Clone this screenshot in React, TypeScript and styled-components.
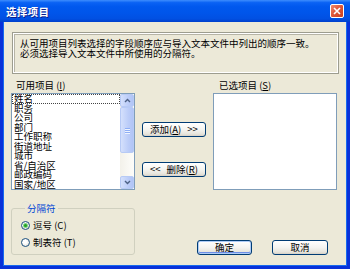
import React from "react";
import styled, { createGlobalStyle } from "styled-components";

const GlobalStyle = createGlobalStyle`
  html, body {
    margin: 0;
    padding: 0;
    background: #0831d9;
  }
  body {
    font-family: "Noto Sans CJK SC", "Liberation Sans", sans-serif;
    font-size: 9.5px;
    color: #000;
  }
`;

const Window = styled.div`
  width: 350px;
  height: 269px;
  display: flex;
  flex-direction: column;
  box-sizing: border-box;
  overflow: hidden;
`;

const TitleBar = styled.div`
  height: 22px;
  flex: none;
  display: flex;
  align-items: center;
  justify-content: space-between;
  padding: 0 6px;
  background: linear-gradient(
    to bottom,
    #3d8dfd 0%,
    #0a62f4 12%,
    #0058ee 30%,
    #0055ea 60%,
    #0150e2 85%,
    #003fcc 100%
  );
`;

const Title = styled.span`
  color: #fff;
  font-weight: bold;
  font-size: 10.5px;
  letter-spacing: 0.3px;
  text-shadow: 1px 1px 0 #0a1e8c;
`;

const CloseButton = styled.div`
  width: 14px;
  height: 14px;
  box-sizing: border-box;
  border: 1px solid #fff;
  border-radius: 2px;
  background: linear-gradient(135deg, #f08a6c 0%, #e0583a 45%, #c8401f 100%);
  display: flex;
  align-items: center;
  justify-content: center;
`;

const Body = styled.div`
  flex: 1;
  display: flex;
  flex-direction: column;
  background: #ece9d8;
  border: 3px solid #0831d9;
  border-top: none;
  box-shadow: inset 1px 0 0 #166aee, inset -1px 0 0 #166aee, inset 0 -1px 0 #166aee;
  padding: 10px 8px 11px 8px;
`;

const InfoBox = styled.div`
  height: 42px;
  box-sizing: border-box;
  margin-left: 1px;
  border: 1px solid #9d9d8f;
  box-shadow: inset 1px 1px 0 #fff, inset -1px -1px 0 #fff, inset 2px 2px 0 #b6b4a6;
  padding: 5px 7px;
  line-height: 10px;
`;

const Columns = styled.div`
  display: grid;
  grid-template-columns: 124px 1fr 124px;
  margin-top: 6px;
  margin-right: 2px;
`;

const Column = styled.div`
  display: flex;
  flex-direction: column;
`;

const Label = styled.div<{ $indent: number }>`
  height: 10px;
  line-height: 10px;
  padding-left: ${(p) => p.$indent}px;
  margin-bottom: 3px;
`;

const ListBox = styled.div`
  height: 97px;
  box-sizing: border-box;
  border: 1px solid #7f9db9;
  background: #fff;
  display: flex;
`;

const Items = styled.div`
  flex: 1;
  display: flex;
  flex-direction: column;
`;

const Item = styled.div<{ $focused?: boolean }>`
  height: 9.5px;
  line-height: 9.5px;
  padding-left: 2px;
  white-space: nowrap;
  outline: ${(p) => (p.$focused ? "1px dotted #444" : "none")};
  outline-offset: -1px;
`;

const ScrollBar = styled.div`
  width: 14px;
  display: flex;
  flex-direction: column;
  background: linear-gradient(to right, #f3f1ea, #fdfdfa);
`;

const ScrollButton = styled.div<{ $h: number }>`
  height: ${(p) => p.$h}px;
  box-sizing: border-box;
  border: 1px solid #b7caf5;
  border-radius: 2px;
  background: linear-gradient(to right, #d4e0fc, #bccdf8 60%, #b0c4f6);
  display: flex;
  align-items: center;
  justify-content: center;
`;

const Thumb = styled(ScrollButton)`
  flex-direction: column;
  gap: 1px;
`;

const Grip = styled.div`
  width: 5px;
  height: 1px;
  background: #8eaef5;
  box-shadow: 0 1px 0 #eef3fe;
`;

const Track = styled.div`
  flex: 1;
`;

const Middle = styled.div`
  display: flex;
  flex-direction: column;
  align-items: center;
  padding-top: 42px;
  gap: 25px;
`;

const Button = styled.div<{ $width: number; $default?: boolean }>`
  width: ${(p) => p.$width}px;
  height: 15px;
  box-sizing: border-box;
  border: 1px solid #003c74;
  border-radius: 3px;
  background: linear-gradient(to bottom, #ffffff 0%, #f4f4f0 50%, #e6e4dc 85%, #d6d0c5 100%);
  box-shadow: ${(p) =>
    p.$default ? "inset 0 0 0 1px #aeccf6, inset 0 -1px 0 1px #6d8ee6" : "none"};
  display: flex;
  align-items: center;
  justify-content: center;
  line-height: 13px;
  white-space: nowrap;
  gap: 6px;
`;

const Bottom = styled.div`
  display: flex;
  align-items: flex-end;
  justify-content: space-between;
  margin-top: 13px;
  margin-right: 11px;
`;

const GroupBox = styled.fieldset`
  width: 124px;
  box-sizing: border-box;
  margin: 0;
  padding: 5px 8px 5px 9px;
  border: 1px solid #d0d0bf;
  border-radius: 3px;
  display: flex;
  flex-direction: column;
  gap: 3px;
`;

const Legend = styled.legend`
  color: #0046d5;
  padding: 0 2px;
  margin-left: 4px;
  line-height: 10px;
  font-size: 9.5px;
`;

const RadioRow = styled.div`
  height: 14px;
  display: flex;
  align-items: center;
  gap: 3px;
`;

const RadioDot = styled.div<{ $checked?: boolean }>`
  width: 9px;
  height: 9px;
  box-sizing: border-box;
  border-radius: 50%;
  border: 1px solid #1c5180;
  background: radial-gradient(circle at 40% 40%, #ffffff 30%, #dcdad0 100%);
  display: flex;
  align-items: center;
  justify-content: center;
  &::after {
    content: "";
    width: 3px;
    height: 3px;
    border-radius: 50%;
    background: ${(p) => (p.$checked ? "#21a121" : "transparent")};
    box-shadow: ${(p) => (p.$checked ? "0 0 0 1px #7fd27f" : "none")};
  }
`;

const ButtonRow = styled.div`
  display: flex;
  gap: 20px;
`;

const Chevron = ({ up }: { up?: boolean }) => (
  <svg width="7" height="5" viewBox="0 0 7 5">
    <path
      d={up ? "M1 4 L3.5 1.5 L6 4" : "M1 1 L3.5 3.5 L6 1"}
      fill="none"
      stroke="#4d6185"
      strokeWidth="1.4"
    />
  </svg>
);

const fields = [
  "姓名",
  "职务",
  "公司",
  "部门",
  "工作职称",
  "街道地址",
  "城市",
  "省/自治区",
  "邮政编码",
  "国家/地区",
];

export default function App() {
  return (
    <>
      <GlobalStyle />
      <Window>
        <TitleBar>
          <Title>选择项目</Title>
          <CloseButton>
            <svg width="8" height="8" viewBox="0 0 8 8">
              <path d="M1 1 L7 7 M7 1 L1 7" stroke="#fff" strokeWidth="1.6" />
            </svg>
          </CloseButton>
        </TitleBar>
        <Body>
          <InfoBox>
            从可用项目列表选择的字段顺序应与导入文本文件中列出的顺序一致。
            <br />
            必须选择导入文本文件中所使用的分隔符。
          </InfoBox>
          <Columns>
            <Column>
              <Label $indent={5}>
                可用项目 (<u>I</u>)
              </Label>
              <ListBox>
                <Items>
                  {fields.map((f, i) => (
                    <Item key={f} $focused={i === 0}>
                      {f}
                    </Item>
                  ))}
                </Items>
                <ScrollBar>
                  <ScrollButton $h={13}>
                    <Chevron up />
                  </ScrollButton>
                  <Thumb $h={46}>
                    <Grip />
                    <Grip />
                    <Grip />
                  </Thumb>
                  <Track />
                  <ScrollButton $h={13}>
                    <Chevron />
                  </ScrollButton>
                </ScrollBar>
              </ListBox>
            </Column>
            <Middle>
              <Button $width={64}>
                <span>
                  添加(<u>A</u>)
                </span>
                <span>&gt;&gt;</span>
              </Button>
              <Button $width={64}>
                <span>&lt;&lt;</span>
                <span>
                  删除(<u>R</u>)
                </span>
              </Button>
            </Middle>
            <Column>
              <Label $indent={6}>
                已选项目 (<u>S</u>)
              </Label>
              <ListBox />
            </Column>
          </Columns>
          <Bottom>
            <GroupBox>
              <Legend>分隔符</Legend>
              <RadioRow>
                <RadioDot $checked />
                <span>逗号 (C)</span>
              </RadioRow>
              <RadioRow>
                <RadioDot />
                <span>制表符 (T)</span>
              </RadioRow>
            </GroupBox>
            <ButtonRow>
              <Button $width={55} $default>
                确定
              </Button>
              <Button $width={56}>取消</Button>
            </ButtonRow>
          </Bottom>
        </Body>
      </Window>
    </>
  );
}
